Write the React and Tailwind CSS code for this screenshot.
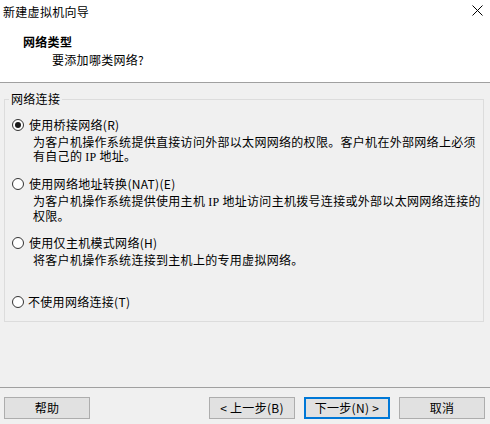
import React from "react";

const font = { fontFamily: '"Noto Sans CJK SC", "Noto Sans", sans-serif' };

function Radio({ checked }) {
  return (
    <span className="w-[12px] h-[12px] rounded-full border border-[#333333] bg-white flex items-center justify-center shrink-0">
      {checked && <span className="w-[6px] h-[6px] rounded-full bg-[#1a1a1a]" />}
    </span>
  );
}

function Option({ checked, label, lines }) {
  return (
    <div className="h-[59px] flex flex-col">
      <div className="h-[16px] flex items-center pl-[7px] gap-[5px]">
        <Radio checked={checked} />
        <span className="leading-[16px]">{label}</span>
      </div>
      <div className="pl-[28px] mt-[2px] leading-[14px]">
        {lines.map((l, i) => (
          <div key={i} className="whitespace-nowrap">{l}</div>
        ))}
      </div>
    </div>
  );
}

function Btn({ children, def }) {
  return (
    <div
      className={
        "w-[86px] h-[22px] flex items-center justify-center bg-[#e1e1e1] text-[12px] leading-[16px] " +
        (def ? "border-2 border-[#0078d7]" : "border border-[#adadad]")
      }
    >
      {children}
    </div>
  );
}

const IP = () => <span className="leading-[14px]" style={{ fontFamily: '"Liberation Serif", serif' }}>IP</span>;

export default function App() {
  return (
    <div className="w-[490px] h-[424px] bg-[#f0f0f0] flex flex-col text-[12px] tracking-[0.3px] text-black overflow-hidden" style={font}>
      <div className="h-[83px] bg-white border-b border-[#a0a0a0] flex flex-col">
        <div className="h-[24px] flex items-center justify-between pl-[3px] pr-[7px]">
          <span className="leading-[16px]">新建虚拟机向导</span>
          <svg width="11" height="11" viewBox="0 0 11 11" className="mt-[-4px]">
            <path d="M0.5 0.5 L10.5 10.5 M10.5 0.5 L0.5 10.5" stroke="#000" strokeWidth="1" fill="none" />
          </svg>
        </div>
        <div className="mt-[10px] pl-[23px] font-bold leading-[16px]">网络类型</div>
        <div className="mt-[2px] pl-[52px] leading-[16px]">要添加哪类网络?</div>
      </div>

      <fieldset className="mt-[8px] ml-[4px] w-[480px] border border-[#dcdcdc] pb-[11px]">
        <legend className="ml-[4px] px-[2px] leading-[16px]">网络连接</legend>
        <div className="pt-[10px] flex flex-col">
          <Option
            checked
            label="使用桥接网络(R)"
            lines={[
              "为客户机操作系统提供直接访问外部以太网网络的权限。客户机在外部网络上必须",
              <>有自己的 <IP /> 地址。</>,
            ]}
          />
          <Option
            label="使用网络地址转换(NAT)(E)"
            lines={[
              <>为客户机操作系统提供使用主机 <IP /> 地址访问主机拨号连接或外部以太网网络连接的</>,
              "权限。",
            ]}
          />
          <Option label="使用仅主机模式网络(H)" lines={["将客户机操作系统连接到主机上的专用虚拟网络。"]} />
          <div className="h-[16px] flex items-center pl-[7px] gap-[4px]">
            <Radio />
            <span className="leading-[16px]">不使用网络连接(T)</span>
          </div>
        </div>
      </fieldset>

      <div className="flex-1" />
      <div className="h-[37px] border-t border-[#a0a0a0] flex items-start pt-[9px] pl-[4px] pr-[5px]">
        <Btn>帮助</Btn>
        <div className="flex-1" />
        <div className="flex gap-[9px]">
          <Btn>&lt; 上一步(B)</Btn>
          <Btn def>下一步(N) &gt;</Btn>
          <Btn>取消</Btn>
        </div>
      </div>
    </div>
  );
}
